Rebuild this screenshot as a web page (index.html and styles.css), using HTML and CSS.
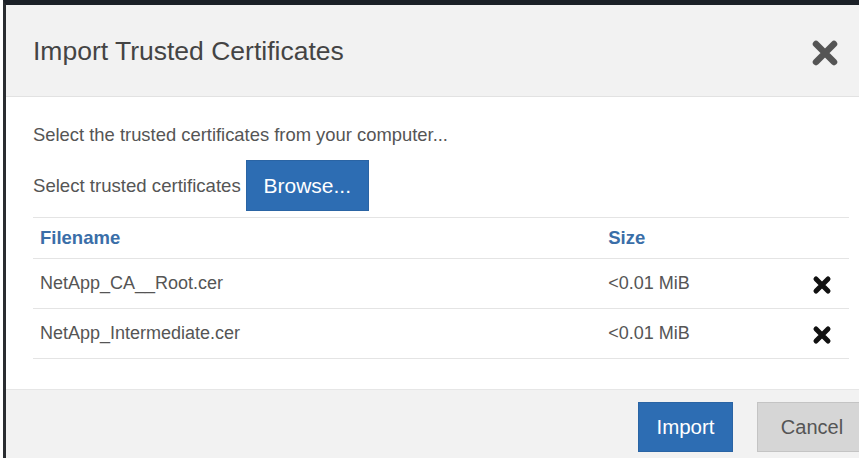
FILE: index.html
```html
<!DOCTYPE html>
<html lang="en">
<head>
<meta charset="utf-8">
<title>Import Trusted Certificates</title>
<link rel="stylesheet" href="styles.css">
</head>
<body>
<div class="dialog">
  <div class="dialog-header">
    <h1 class="dialog-title">Import Trusted Certificates</h1>
    <button class="close-btn" aria-label="Close">
      <svg width="26" height="26" viewBox="0 0 26 26"><path d="M4 4 L22 22 M22 4 L4 22" stroke="#555" stroke-width="6.5" stroke-linecap="round"/></svg>
    </button>
  </div>
  <div class="dialog-body">
    <p class="intro">Select the trusted certificates from your computer...</p>
    <div class="picker">
      <span class="picker-label">Select trusted certificates</span>
      <button class="btn btn-primary btn-browse">Browse...</button>
    </div>
    <table class="files">
      <thead>
        <tr><th class="col-name">Filename</th><th class="col-size">Size</th><th class="col-act"></th></tr>
      </thead>
      <tbody>
        <tr>
          <td class="col-name">NetApp_CA__Root.cer</td>
          <td class="col-size">&lt;0.01 MiB</td>
          <td class="col-act"><svg class="remove" width="20" height="20" viewBox="0 0 20 20"><path d="M4 4 L16 16 M16 4 L4 16" stroke="#111" stroke-width="5" stroke-linecap="round"/></svg></td>
        </tr>
        <tr>
          <td class="col-name">NetApp_Intermediate.cer</td>
          <td class="col-size">&lt;0.01 MiB</td>
          <td class="col-act"><svg class="remove" width="20" height="20" viewBox="0 0 20 20"><path d="M4 4 L16 16 M16 4 L4 16" stroke="#111" stroke-width="5" stroke-linecap="round"/></svg></td>
        </tr>
      </tbody>
    </table>
  </div>
  <div class="dialog-footer">
    <button class="btn btn-primary btn-import">Import</button>
    <button class="btn btn-default btn-cancel">Cancel</button>
  </div>
</div>
</body>
</html>
```
FILE: styles.css
```css
html, body {
  margin: 0;
  padding: 0;
  background: #ffffff;
  overflow: hidden;
}

body {
  font-family: "Liberation Sans", Arial, sans-serif;
  color: #555;
}

.dialog {
  margin-left: 3px;
  width: 866px;
  height: 460px;
  border-top: 5px solid #1b2027;
  border-left: 3px solid #2a2d31;
  background: #fff;
  display: flex;
  flex-direction: column;
}

.dialog-header {
  height: 91px;
  flex: none;
  background: #f2f2f2;
  border-bottom: 1px solid #e2e2e2;
  display: flex;
  align-items: center;
  justify-content: space-between;
  padding: 0 34px 0 27px;
}

.dialog-title {
  margin: 0;
  font-size: 26.5px;
  font-weight: normal;
  color: #444;
  padding-top: 2px;
}

.close-btn {
  background: none;
  border: 0;
  padding: 0;
  display: flex;
  margin-top: 4px;
}

.dialog-body {
  box-sizing: border-box;
  flex: none;
  height: 293px;
  padding: 29px 23px 0 27px;
  border-bottom: 1px solid #e6e6e6;
}

.intro {
  margin: 0;
  font-size: 18.4px;
  line-height: 18px;
}

.picker {
  display: flex;
  align-items: center;
  margin-top: 16px;
}

.picker-label {
  font-size: 18.6px;
  margin-right: 5px;
}

.btn {
  font-family: "Liberation Sans", Arial, sans-serif;
  border-radius: 0;
  cursor: pointer;
  padding: 0;
}

.btn-primary {
  background: #2d6db3;
  border: 1px solid #2a64a4;
  color: #fff;
}

.btn-browse {
  width: 123px;
  height: 51px;
  font-size: 21px;
}

.files {
  width: 100%;
  margin-top: 6px;
  border-collapse: collapse;
  font-size: 18px;
}

.files th,
.files td {
  text-align: left;
  padding: 0 7px;
}

.files th {
  height: 40px;
  color: #3a6ea8;
  font-weight: bold;
  font-size: 18.5px;
  border-top: 1px solid #e4e4e4;
  border-bottom: 1px solid #e4e4e4;
}

.files td {
  height: 49px;
  border-bottom: 1px solid #e4e4e4;
}

.files .col-name { width: 555px; }
.files .col-size { width: 190px; }
.files .col-act { text-align: right; padding-right: 17px; }

.remove { display: block; margin-left: auto; margin-top: 3px; }

.dialog-footer {
  flex: 1;
  background: #f2f2f2;
  display: flex;
  align-items: flex-start;
  justify-content: flex-end;
  padding: 12px 5px 0 0;
  gap: 24px;
}

.btn-import {
  width: 95px;
  height: 50px;
  font-size: 20.5px;
}

.btn-default {
  background: #d6d6d6;
  border: 1px solid #c4c4c4;
  color: #555;
}

.btn-cancel {
  width: 110px;
  height: 50px;
  font-size: 20px;
}
```
